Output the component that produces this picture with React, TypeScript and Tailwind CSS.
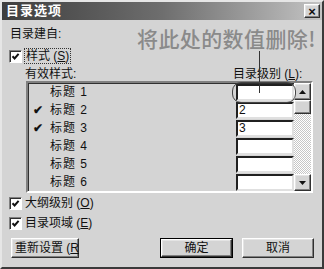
import React from 'react';

const raised =
  'border border-t-white border-l-white border-r-[#303030] border-b-[#303030] shadow-[inset_-1px_-1px_0_#808080,inset_1px_1px_0_#e4e4e4] bg-[#d4d4d4]';

const CheckBox: React.FC<{ checked?: boolean }> = ({ checked }) => (
  <span className="w-[13px] h-[13px] bg-white border border-t-[#808080] border-l-[#808080] border-r-white border-b-white shadow-[inset_1px_1px_0_#303030] flex items-center justify-center shrink-0">
    {checked && (
      <svg width="9" height="9" viewBox="0 0 9 9">
        <path d="M1.5 4.2 L3.6 6.4 L7.6 1.8" stroke="#111" strokeWidth="2" fill="none" />
      </svg>
    )}
  </span>
);

const rows = [
  { name: '标题 1', value: '', checked: false },
  { name: '标题 2', value: '2', checked: true },
  { name: '标题 3', value: '3', checked: true },
  { name: '标题 4', value: '', checked: false },
  { name: '标题 5', value: '', checked: false },
  { name: '标题 6', value: '', checked: false },
];

export default function App() {
  return (
    <div className="relative w-[324px] h-[269px] bg-[#d4d4d4] border-2 border-t-[#e6e6e6] border-l-[#e6e6e6] border-r-[#3a3a3a] border-b-[#3a3a3a] text-[#111] text-[12px] leading-[14px] font-['Liberation_Sans','Noto_Sans_CJK_SC',sans-serif] overflow-hidden">
      {/* Title bar */}
      <div className="h-[18px] flex items-center justify-between pl-[4px] pr-[2px] bg-gradient-to-r from-[#3e3e3e] via-[#6e6e6e] to-[#c4c4c4]">
        <span className="text-white font-bold text-[13px] tracking-[1px]">目录选项</span>
        <span className={`w-[16px] h-[14px] flex items-center justify-center text-[13px] font-bold leading-none ${raised}`}>
          ×
        </span>
      </div>

      {/* Body */}
      <div className="pl-[7px] pr-[7px] flex flex-col">
        <div className="mt-[7px] pl-[1px]">目录建自:</div>

        <div className="mt-[7px] h-[16px] flex items-center gap-[2px]">
          <CheckBox checked />
          <span className="px-[1px] h-[16px] flex items-center border border-dotted border-[#333]">样式 (<span className="underline">S</span>)</span>
        </div>

        <div className="mt-[3px] flex pl-[16px] pr-[2px]">
          <span className="flex-1">有效样式:</span>
          <span className="w-[80px]">目录级别 (<span className="underline">L</span>):</span>
        </div>

        {/* List */}
        <div className="ml-[17px] mr-[2px] border-2 border-t-[#808080] border-l-[#808080] border-r-white border-b-white shadow-[inset_1px_1px_0_#303030] flex">
          <div className="flex-1 flex flex-col">
            {rows.map((r) => (
              <div key={r.name} className="h-[18px] flex items-center">
                <span className="w-[22px] pl-[5px] text-[12px] font-bold">{r.checked ? '✔' : ''}</span>
                <span className="tracking-[1px]">{r.name}</span>
                <span className="ml-auto w-[58px] h-[17px] bg-white border-2 border-t-[#202020] border-l-[#202020] border-r-[#e0e0e0] border-b-[#e0e0e0] pl-[1px] leading-[13px]">
                  {r.value}
                </span>
              </div>
            ))}
          </div>
          <div className="w-[17px] flex flex-col">
            <div className={`h-[17px] flex items-center justify-center ${raised}`}>
              <svg width="7" height="4" viewBox="0 0 7 4"><path d="M0 4 L3.5 0 L7 4 Z" fill="#111" /></svg>
            </div>
            <div className={`h-[14px] ${raised}`} />
            <div className="flex-1 bg-[repeating-conic-gradient(#ffffff_0%_25%,#c6c6c6_0%_50%)] bg-[length:2px_2px]" />
            <div className={`h-[17px] flex items-center justify-center ${raised}`}>
              <svg width="7" height="4" viewBox="0 0 7 4"><path d="M0 0 L7 0 L3.5 4 Z" fill="#111" /></svg>
            </div>
          </div>
        </div>

        <div className="mt-[2px] h-[16px] flex items-center gap-[3px]">
          <CheckBox checked />
          <span>大纲级别 (<span className="underline">O</span>)</span>
        </div>
        <div className="mt-[4px] h-[16px] flex items-center gap-[3px]">
          <CheckBox checked />
          <span>目录项域 (<span className="underline">E</span>)</span>
        </div>

        {/* Buttons */}
        <div className="mt-[7px] flex items-center pl-[2px] pr-[1px]">
          <button className={`w-[68px] h-[20px] whitespace-nowrap text-left pl-[3px] ${raised}`}>
            重新设置 (<span className="underline">R</span>
          </button>
          <div className="ml-auto flex gap-[9px]">
            <div className="border border-black">
              <button className={`w-[71px] h-[18px] ${raised}`}>确定</button>
            </div>
            <button className={`w-[72px] h-[20px] ${raised}`}>取消</button>
          </div>
        </div>
      </div>

      {/* Annotation overlay */}
      <div className="absolute left-[135px] top-[26px] text-[21px] leading-none font-medium text-[#8a8a8a] font-['Noto_Sans_CJK_SC',sans-serif] tracking-[0.4px] whitespace-nowrap">
        将此处的数值删除!
      </div>
      <div className="absolute left-[257px] top-[49px] w-[1px] h-[42px] bg-[#333]" />
      <div className="absolute left-[230px] top-[80px] w-[64px] h-[21px] border border-[#444] rounded-[9px]" />
    </div>
  );
}
